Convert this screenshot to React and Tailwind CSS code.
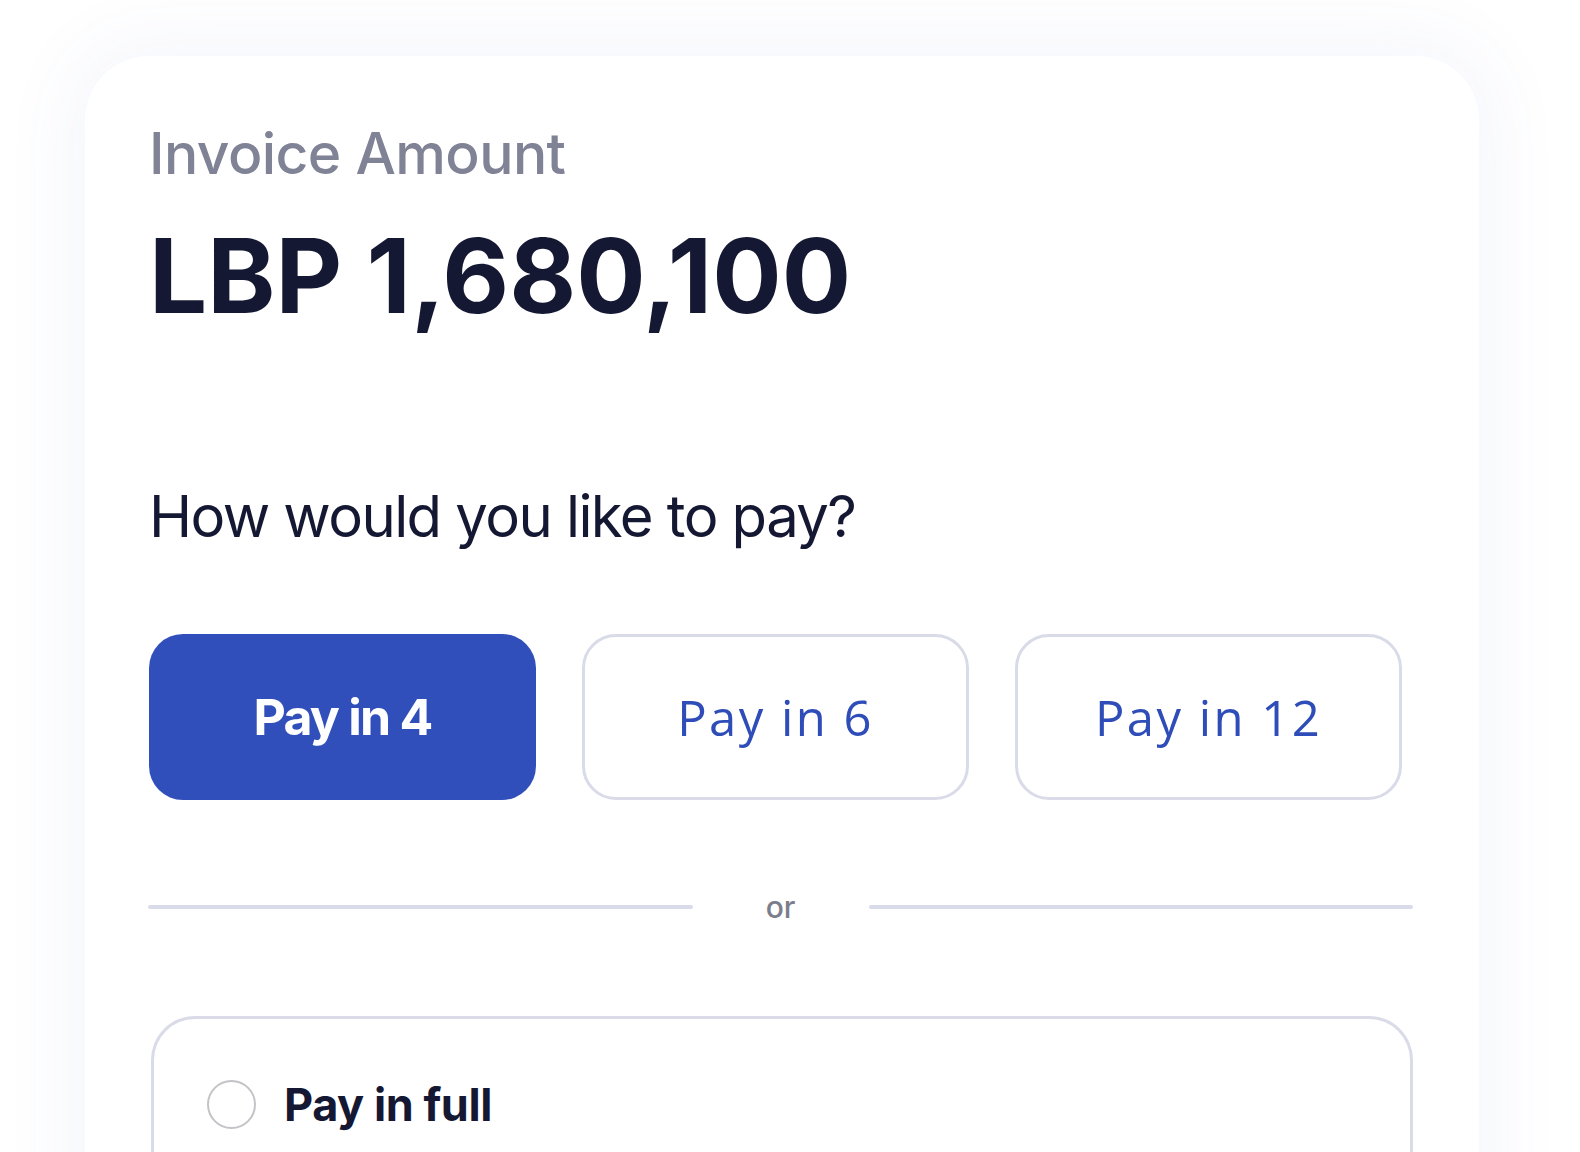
import React from 'react';

const plans = [
    { label: 'Pay in 4', active: true },
    { label: 'Pay in 6', active: false },
    { label: 'Pay in 12', active: false },
];

const PlanButton = ({ label, active }) => {
    if (active) {
        return (
            <button className="w-[387px] h-[166px] rounded-[34px] bg-[#304fba] text-white font-['Inter',sans-serif] font-bold text-[50px] leading-none tracking-[-0.035em] flex items-center justify-center">
                {label}
            </button>
        );
    }
    return (
        <button className="w-[387px] h-[166px] rounded-[34px] border-[3px] border-[#d9dbe8] bg-white text-[#2f4db8] font-['Open_Sans',sans-serif] font-normal text-[49px] leading-none tracking-[0.05em] flex items-center justify-center">
            {label}
        </button>
    );
};

export default function App() {
    return (
        <div className="min-h-screen bg-white pt-[56px] pl-[85px] pr-[101px] font-['Inter',sans-serif]">
            <div className="rounded-t-[64px] bg-white shadow-[0_0_70px_20px_rgba(70,100,190,0.05)] pt-[69px] pl-[64px] pr-[66px] pb-[200px]">
                {/* Amount */}
                <div className="text-[57px] leading-none font-medium text-[#808295] tracking-[-0.01em]">Invoice Amount</div>
                <div className="mt-[42px] text-[103px] leading-none font-bold text-[#151833] tracking-normal">LBP 1,680,100</div>

                {/* Question */}
                <div className="mt-[160px] text-[58px] leading-none font-normal text-[#151833] tracking-[-0.027em]">How would you like to pay?</div>

                {/* Plans */}
                <div className="mt-[89px] flex gap-[46px]">
                    {plans.map((p) => (
                        <PlanButton key={p.label} label={p.label} active={p.active} />
                    ))}
                </div>

                {/* Divider */}
                <div className="mt-[92px] flex items-center -ml-[1px]">
                    <div className="flex-1 h-[4px] rounded-full bg-[#d9dbe8]" />
                    <span className="w-[176px] text-center text-[30px] leading-none font-medium text-[#7b7d8b]">or</span>
                    <div className="flex-1 h-[4px] rounded-full bg-[#d9dbe8]" />
                </div>

                {/* Pay in full */}
                <div className="mt-[94px] ml-[2px] rounded-t-[44px] border-[3px] border-b-0 border-[#d9dbe8] pt-[61px] pl-[53px] pb-[120px]">
                    <div className="flex items-center gap-[28px]">
                        <span className="w-[49px] h-[49px] rounded-full border-2 border-[#c4c4c8] bg-white" />
                        <span className="text-[45px] leading-none font-bold text-[#151833] tracking-[-0.01em]">Pay in full</span>
                    </div>
                </div>
            </div>
        </div>
    );
}
